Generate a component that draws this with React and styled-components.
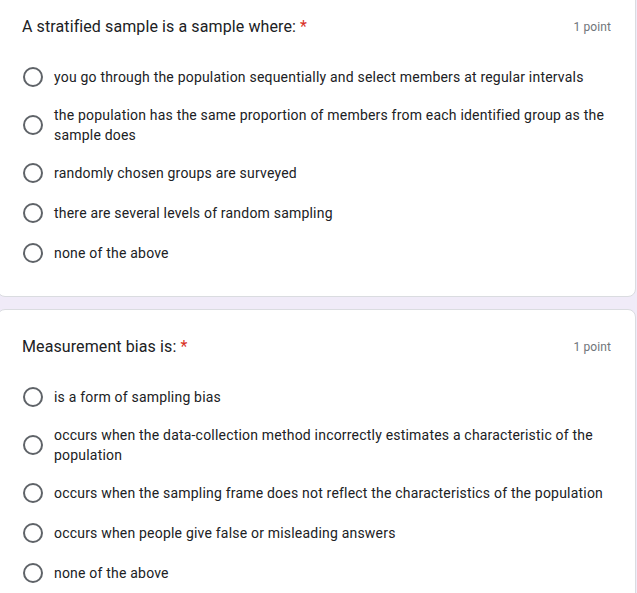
import React from "react";
import styled, { createGlobalStyle } from "styled-components";

const GlobalStyle = createGlobalStyle`
  html, body {
    margin: 0;
    padding: 0;
    background: #f0ebf8;
    overflow: hidden;
  }
  body {
    font-family: Roboto, "Liberation Sans", Arial, sans-serif;
  }
`;

const Page = styled.div`
  display: flex;
  flex-direction: column;
  gap: 12px;
  margin-top: -11px;
  margin-left: -3px;
  width: 639px;
`;

const Card = styled.div`
  background: #fff;
  border: 1px solid #dadce0;
  border-radius: 8px;
  padding: 25px 24px 23px;
`;

const Header = styled.div`
  display: flex;
  align-items: center;
  justify-content: space-between;
  height: 24px;
  margin-bottom: 18px;
`;

const Title = styled.div`
  font-size: 16px;
  line-height: 24px;
  letter-spacing: 0.1px;
  color: #202124;
`;

const Required = styled.span`
  color: #d93025;
  margin-left: 4px;
`;

const Points = styled.div`
  font-size: 12px;
  letter-spacing: 0.1px;
  color: #70757a;
`;

const Options = styled.div`
  display: flex;
  flex-direction: column;
`;

const Option = styled.label`
  display: flex;
  align-items: center;
  gap: 11px;
  padding: 8px 0;
  min-height: 24px;
`;

const Radio = styled.span`
  flex: none;
  width: 16px;
  height: 16px;
  margin-left: 1px;
  border: 2px solid #5f6368;
  border-radius: 50%;
`;

const OptionText = styled.span`
  font-size: 14px;
  line-height: 20px;
  letter-spacing: 0.2px;
  color: #202124;
`;

const questions = [
  {
    title: "A stratified sample is a sample where:",
    options: [
      "you go through the population sequentially and select members at regular intervals",
      "the population has the same proportion of members from each identified group as the sample does",
      "randomly chosen groups are surveyed",
      "there are several levels of random sampling",
      "none of the above",
    ],
  },
  {
    title: "Measurement bias is:",
    options: [
      "is a form of sampling bias",
      "occurs when the data-collection method incorrectly estimates a characteristic of the population",
      "occurs when the sampling frame does not reflect the characteristics of the population",
      "occurs when people give false or misleading answers",
      "none of the above",
    ],
  },
];

const Question = ({ title, options }) => (
  <Card>
    <Header>
      <Title>
        {title}
        <Required>*</Required>
      </Title>
      <Points>1 point</Points>
    </Header>
    <Options>
      {options.map((o) => (
        <Option key={o}>
          <Radio />
          <OptionText>{o}</OptionText>
        </Option>
      ))}
    </Options>
  </Card>
);

const App = () => (
  <>
    <GlobalStyle />
    <Page>
      {questions.map((q) => (
        <Question key={q.title} {...q} />
      ))}
    </Page>
  </>
);

export default App;
